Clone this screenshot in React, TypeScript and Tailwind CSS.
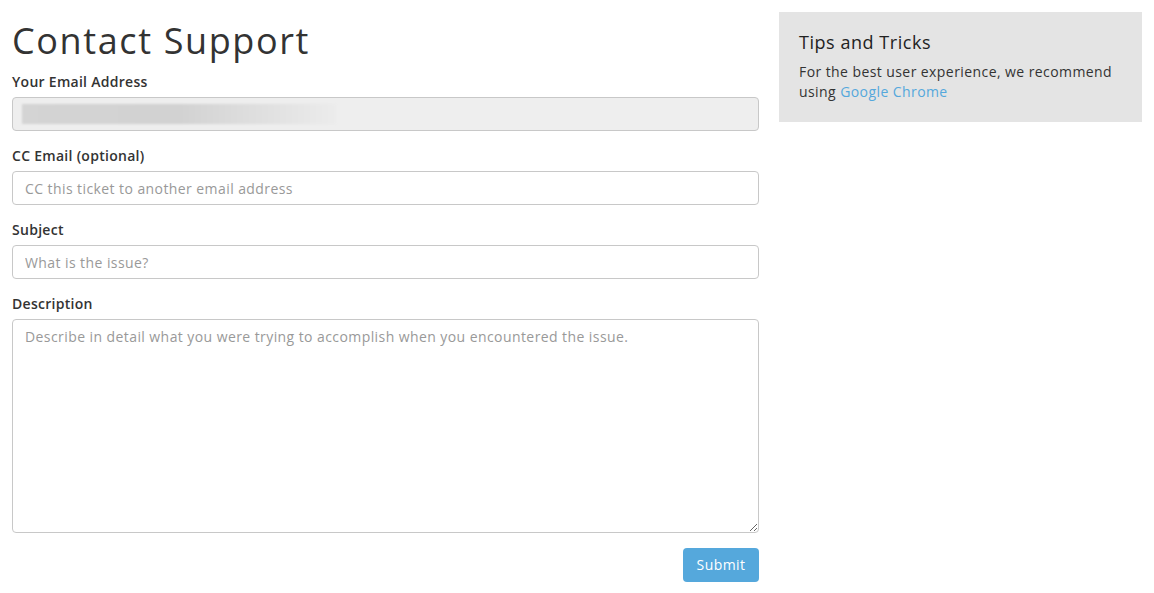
import React from 'react';

const inputClass =
  'w-full h-[34px] rounded border border-[#c8c8c8] bg-white px-3 text-sm tracking-[0.03em] text-[#333] placeholder:text-[#999] outline-none';

const Label: React.FC<{ children: React.ReactNode }> = ({ children }) => (
  <label className="block text-sm font-semibold tracking-[0.02em] text-[#333] mb-[5px] leading-5">{children}</label>
);

export default function App() {
  return (
    <div
      className="w-[1154px] min-h-[593px] bg-white px-3 pt-3 flex gap-5"
      style={{ fontFamily: '"Open Sans", sans-serif' }}
    >
      {/* Ticket form */}
      <div className="w-[747px] shrink-0">
        <h1 className="text-[36px] leading-[40px] font-normal tracking-[0.045em] text-[#333] mt-[9px] mb-[11px]">
          Contact Support
        </h1>

        <div className="mb-[15px]">
          <Label>Your Email Address</Label>
          <div className="h-[34px] rounded border border-[#c8c8c8] bg-[#eeeeee] flex items-center pl-[9px]">
            <div className="h-5 w-[314px] bg-gradient-to-r from-[#d4d4d4] via-[#d2d2d2] to-[#ececec] blur-[1px]" />
          </div>
        </div>

        <div className="mb-[15px]">
          <Label>CC Email (optional)</Label>
          <input className={inputClass} placeholder="CC this ticket to another email address" />
        </div>

        <div className="mb-[15px]">
          <Label>Subject</Label>
          <input className={inputClass} placeholder="What is the issue?" />
        </div>

        <div className="mb-[15px]">
          <Label>Description</Label>
          <textarea
            className="block w-full h-[214px] rounded border border-[#c8c8c8] bg-white px-3 py-[7px] text-sm tracking-[0.03em] text-[#333] placeholder:text-[#999] outline-none resize-y"
            placeholder="Describe in detail what you were trying to accomplish when you encountered the issue."
          />
        </div>

        <div className="flex justify-end">
          <button className="h-[34px] w-[76px] rounded bg-[#55a8dc] text-sm tracking-[0.03em] text-white">Submit</button>
        </div>
      </div>

      {/* Sidebar */}
      <div className="w-[363px] shrink-0">
        <div className="bg-[#e4e4e4] px-5 pt-[18px] pb-5">
          <h3 className="text-lg leading-6 tracking-[0.03em] text-[#222] mb-2">Tips and Tricks</h3>
          <p className="text-sm leading-5 tracking-[0.03em] text-[#333]">
            For the best user experience, we recommend using{' '}
            <a className="text-[#55a8dc]" href="#">Google Chrome</a>
          </p>
        </div>
      </div>
    </div>
  );
}
